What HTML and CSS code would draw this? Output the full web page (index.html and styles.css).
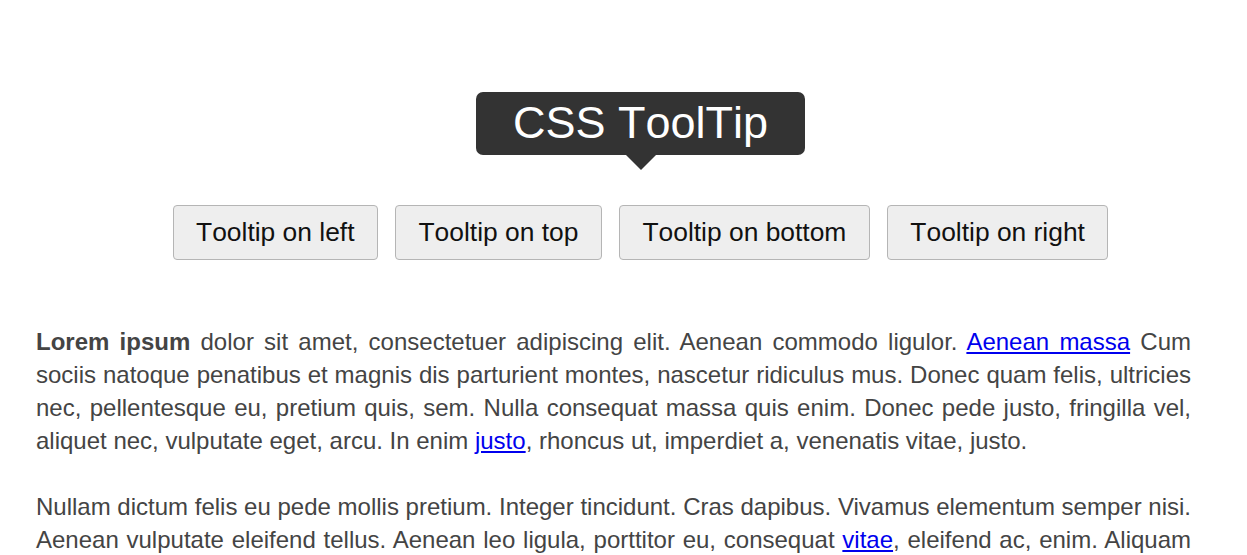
FILE: index.html
```html
<!DOCTYPE html>
<html lang="en">
<head>
<meta charset="utf-8">
<title>CSS ToolTip</title>
<link rel="stylesheet" href="styles.css">
</head>
<body>
<section class="demo">
  <div class="tip">CSS ToolTip</div>
  <div class="buttons">
    <button class="btn">Tooltip on left</button>
    <button class="btn">Tooltip on top</button>
    <button class="btn">Tooltip on bottom</button>
    <button class="btn">Tooltip on right</button>
  </div>
</section>
<main class="content">
  <p><strong>Lorem ipsum</strong> dolor sit amet, consectetuer adipiscing elit. Aenean commodo ligulor. <a href="#">Aenean massa</a> Cum sociis natoque penatibus et magnis dis parturient montes, nascetur ridiculus mus. Donec quam felis, ultricies nec, pellentesque eu, pretium quis, sem. Nulla consequat massa quis enim. Donec pede justo, fringilla vel, aliquet nec, vulputate eget, arcu. In enim <a href="#">justo</a>, rhoncus ut, imperdiet a, venenatis vitae, justo.</p>
  <p>Nullam dictum felis eu pede mollis pretium. Integer tincidunt. Cras dapibus. Vivamus elementum semper nisi. Aenean vulputate eleifend tellus. Aenean leo ligula, porttitor eu, consequat <a href="#">vitae</a>, eleifend ac, enim. Aliquam lorem ante, dapibus in, viverra quis, feugiat a, tellus. Phasellus viverra nulla ut metus varius laoreet. Quisque rutrum.</p>
</main>
</body>
</html>
```

FILE: styles.css
```css
html, body {
  margin: 0;
  padding: 0;
  background: #fff;
}
body {
  font-family: "Liberation Sans", Arial, sans-serif;
  font-size: 24px;
  line-height: 33px;
  color: #444;
  overflow: hidden;
}
.demo {
  display: flex;
  flex-direction: column;
  align-items: center;
  padding: 92px 0 0 34px;
}
.tip {
  position: relative;
  background: #333;
  color: #fff;
  font-size: 45px;
  line-height: 52px;
  font-kerning: none;
  padding: 5px 37px 6px 37px;
  border-radius: 7px;
}
.tip::after {
  content: "";
  position: absolute;
  left: 50%;
  top: 100%;
  margin-left: -15px;
  border-left: 15px solid transparent;
  border-right: 15px solid transparent;
  border-top: 15px solid #333;
}
.buttons {
  display: flex;
  gap: 17px;
  margin-top: 50px;
}
.btn {
  font-family: "Liberation Sans", Arial, sans-serif;
  font-size: 26.4px;
  line-height: 31px;
  font-kerning: none;
  color: #111;
  background: #eee;
  border: 1px solid #b5b5b5;
  border-radius: 4px;
  padding: 11px 22.5px;
  margin: 0;
}
.content {
  width: 1155px;
  margin: 0 0 0 36px;
  padding-top: 32px;
}
.content p {
  margin: 33px 0;
  text-align: justify;
}
.content a {
  color: #0000ee;
  text-decoration: underline;
}
.content strong {
  font-weight: bold;
}
```
